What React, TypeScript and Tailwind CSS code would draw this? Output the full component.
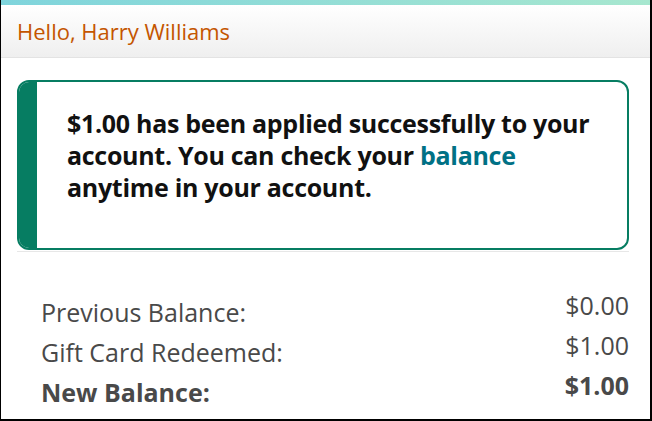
export default function App() {
  const rows = [
    { label: 'Previous Balance:', amount: '$0.00', weight: 'font-normal' },
    { label: 'Gift Card Redeemed:', amount: '$1.00', weight: 'font-normal' },
    { label: 'New Balance:', amount: '$1.00', weight: 'font-bold' },
  ]

  return (
    <div
      className="w-[652px] h-[421px] overflow-hidden bg-white border-l border-r-2 border-b-2 border-black"
      style={{ fontFamily: '"Open Sans", "Liberation Sans", sans-serif' }}
    >
      {/* Top accent */}
      <div className="h-[5px] bg-gradient-to-r from-[#7fd4dc] to-[#a7e7cf]" />

      {/* Greeting header */}
      <div className="h-[53px] flex items-center px-[16px] bg-gradient-to-b from-white to-[#efefef] border-b border-[#e3e3e3]">
        <span className="text-[22px] text-[#c45500]">Hello, Harry Williams</span>
      </div>

      <div className="pl-[16px] pr-[21px] pt-[22px]">
        {/* Success alert */}
        <div className="h-[170px] flex rounded-[12px] border-2 border-[#067d62] overflow-hidden">
          <div className="w-[18px] shrink-0 bg-[#067d62]" />
          <p className="pl-[30px] pt-[25px] pr-[8px] text-[25px] leading-[32px] font-bold text-[#111] tracking-[-0.3px]">
            $1.00 has been applied successfully to your account. You can check your{' '}
            <span className="text-[#007185]">balance</span>
            <br />
            anytime in your account.
          </p>
        </div>
        <div className="h-px bg-[#e7e7e7] mt-[1px]" />

        {/* Balance summary */}
        <div className="pl-[24px] pt-[40px] flex flex-col text-[#494949] text-[25px]">
          {rows.map((row) => (
            <div key={row.label} className={`flex justify-between items-start ${row.weight}`}>
              <span className="leading-[40px]">{row.label}</span>
              <span className="leading-[26px]">{row.amount}</span>
            </div>
          ))}
        </div>
      </div>
    </div>
  )
}
